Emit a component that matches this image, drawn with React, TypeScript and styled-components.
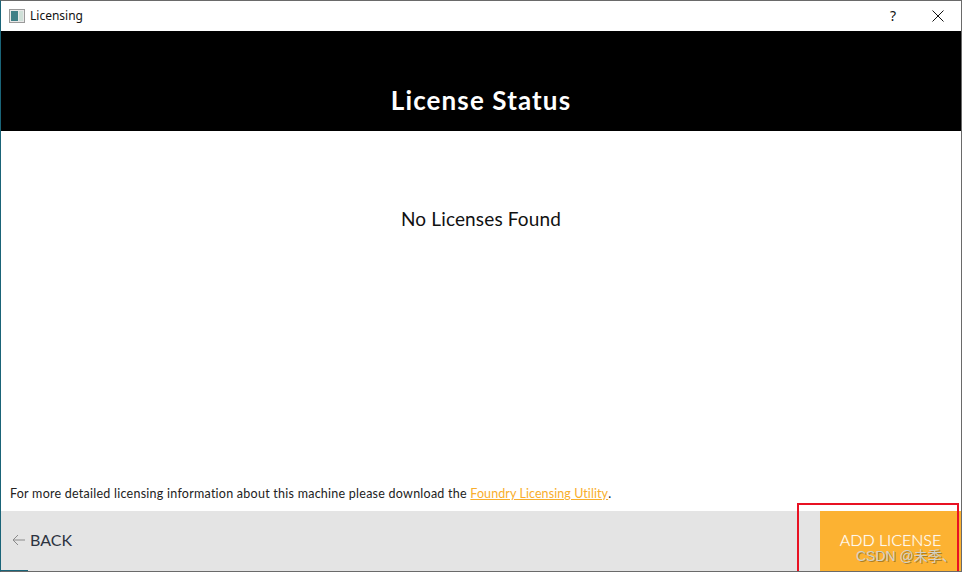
import React from 'react'
import styled, { createGlobalStyle } from 'styled-components'

const GlobalStyle = createGlobalStyle`
    html, body {
        margin: 0;
        padding: 0;
        background: #ffffff;
    }
    body {
        font-family: "Lato", "Liberation Sans", sans-serif;
    }
`

const App: React.FC = () => {
    return (
        <React.Fragment>
            <GlobalStyle />
            <Window>
                <TitleBar>
                    <AppIcon viewBox="0 0 16 14" width="16" height="14">
                        <rect x="0.5" y="0.5" width="15" height="13" fill="#e8e8e8" stroke="#9a9a9a" />
                        <rect x="2" y="2" width="7" height="10" fill="#3f7f86" />
                        <rect x="10" y="2" width="4" height="10" fill="#cfe0d8" />
                    </AppIcon>
                    <TitleText>Licensing</TitleText>
                    <TitleActions>
                        <HelpButton>?</HelpButton>
                        <CloseButton>
                            <svg viewBox="0 0 12 12" width="12" height="12">
                                <path d="M0.5 0.5L11.5 11.5M11.5 0.5L0.5 11.5" stroke="#111" strokeWidth="1" fill="none" />
                            </svg>
                        </CloseButton>
                    </TitleActions>
                </TitleBar>
                <Banner>
                    <BannerTitle>License Status</BannerTitle>
                </Banner>
                <Content>
                    <StatusMessage>No Licenses Found</StatusMessage>
                    <InfoLine>
                        For more detailed licensing information about this machine please download the{' '}
                        <UtilityLink>Foundry Licensing Utility</UtilityLink>.
                    </InfoLine>
                </Content>
                <Footer>
                    <BackButton>
                        <svg viewBox="0 0 14 12" width="14" height="12">
                            <path d="M13 6H1M6 1L1 6L6 11" stroke="#8a8a8a" strokeWidth="1" fill="none" />
                        </svg>
                        <span>BACK</span>
                    </BackButton>
                    <AddButton>ADD LICENSE</AddButton>
                </Footer>
                <Annotation />
                <Watermark>CSDN @未季、</Watermark>
            </Window>
        </React.Fragment>
    )
}

export default App

const Window = styled.div`
    position: relative;
    width: 962px;
    height: 572px;
    box-sizing: border-box;
    display: flex;
    flex-direction: column;
    overflow: hidden;
    background: #ffffff;
    border-left: 1px solid #1a6478;
    border-right: 1px solid #6a6a6a;
    border-top: 1px solid #6a6a6a;
    border-bottom: 1px solid #6a6a6a;

    /* desktop behind the window shows teal only on part of the edge */
    &::before {
        content: '';
        position: absolute;
        left: -1px;
        top: -1px;
        width: 1px;
        height: 234px;
        background: #333333;
    }
    &::after {
        content: '';
        position: absolute;
        left: -1px;
        bottom: 0;
        width: 28px;
        height: 1px;
        background: #1a6478;
    }
`

const TitleBar = styled.div`
    height: 30px;
    flex: none;
    display: flex;
    align-items: center;
    padding-left: 8px;
    background: #ffffff;
`

const AppIcon = styled.svg`
    flex: none;
    margin-right: 5px;
`

const TitleText = styled.span`
    font-family: "Noto Sans", "Liberation Sans", sans-serif;
    font-size: 12px;
    line-height: 28px;
    padding-bottom: 1px;
    color: #111111;
`

const TitleActions = styled.div`
    margin-left: auto;
    display: flex;
    align-items: center;
`

const HelpButton = styled.div`
    width: 46px;
    padding: 0 0 1px 2px;
    box-sizing: border-box;
    text-align: center;
    font-family: "Noto Sans", "Liberation Sans", sans-serif;
    font-size: 14px;
    color: #111111;
`

const CloseButton = styled.div`
    width: 46px;
    display: flex;
    justify-content: center;
    align-items: center;
`

const Banner = styled.div`
    height: 100px;
    flex: none;
    display: flex;
    align-items: center;
    justify-content: center;
    background: #000000;
`

const BannerTitle = styled.h1`
    margin: 0;
    padding-top: 38px;
    font-size: 26px;
    font-weight: 700;
    color: #ffffff;
    letter-spacing: 1.12px;
`

const Content = styled.div`
    flex: 1;
    display: flex;
    flex-direction: column;
    justify-content: space-between;
    align-items: stretch;
    padding: 76px 9px 9px;
`

const StatusMessage = styled.div`
    text-align: center;
    font-size: 19px;
    line-height: 24px;
    letter-spacing: 0.14px;
    color: #111111;
`

const InfoLine = styled.div`
    font-size: 12.5px;
    line-height: 16px;
    letter-spacing: 0.25px;
    color: #222222;
`

const UtilityLink = styled.a`
    color: #f9ae2c;
    letter-spacing: 0.08px;
    text-decoration: underline;
`

const Footer = styled.div`
    height: 60px;
    flex: none;
    display: flex;
    align-items: stretch;
    justify-content: space-between;
    background: #e4e4e4;
`

const BackButton = styled.div`
    display: flex;
    align-items: center;
    gap: 4px;
    padding: 0 0 3px 11px;
    font-size: 16px;
    color: #2c3340;
`

const AddButton = styled.div`
    width: 141px;
    box-sizing: border-box;
    padding-bottom: 3px;
    display: flex;
    align-items: center;
    justify-content: center;
    background: #fcb232;
    color: #ffffff;
    font-size: 16px;
    font-weight: 300;
    text-shadow: 0 0 1px rgba(255, 255, 255, 0.6);
`

const Annotation = styled.div`
    position: absolute;
    left: 796px;
    top: 502px;
    width: 162px;
    height: 80px;
    box-sizing: border-box;
    border: 2px solid #e81123;
`

const Watermark = styled.div`
    position: absolute;
    left: 855px;
    top: 544px;
    font-family: "Liberation Sans", "Noto Sans CJK SC", sans-serif;
    font-size: 14px;
    color: #d2d2c8;
    text-shadow: 1px 1px 0 rgba(120, 90, 30, 0.6);
    white-space: nowrap;
`
